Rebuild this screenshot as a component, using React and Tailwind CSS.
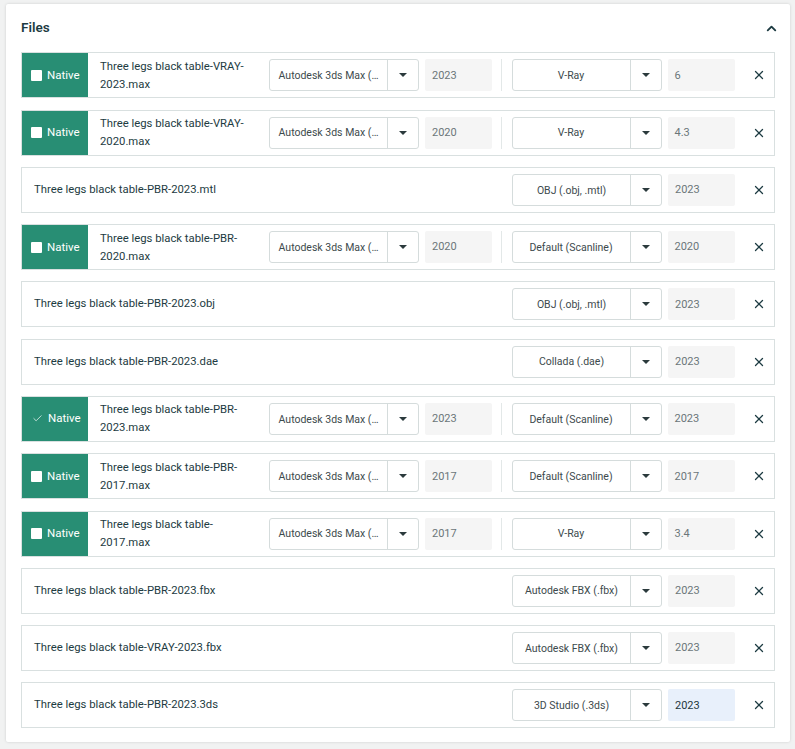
import { X, ChevronUp, Check } from 'lucide-react'

const files = [
  { name: 'Three legs black table-VRAY-2023.max', native: true, renderer: 'V-Ray', version: '6', year: '2023' },
  { name: 'Three legs black table-VRAY-2020.max', native: true, renderer: 'V-Ray', version: '4.3', year: '2020' },
  { name: 'Three legs black table-PBR-2023.mtl', renderer: 'OBJ (.obj, .mtl)', version: '2023' },
  { name: 'Three legs black table-PBR-2020.max', native: true, renderer: 'Default (Scanline)', version: '2020', year: '2020' },
  { name: 'Three legs black table-PBR-2023.obj', renderer: 'OBJ (.obj, .mtl)', version: '2023' },
  { name: 'Three legs black table-PBR-2023.dae', renderer: 'Collada (.dae)', version: '2023' },
  { name: 'Three legs black table-PBR-2023.max', native: true, checked: true, renderer: 'Default (Scanline)', version: '2023', year: '2023' },
  { name: 'Three legs black table-PBR-2017.max', native: true, renderer: 'Default (Scanline)', version: '2017', year: '2017' },
  { name: 'Three legs black table-2017.max', native: true, renderer: 'V-Ray', version: '3.4', year: '2017' },
  { name: 'Three legs black table-PBR-2023.fbx', renderer: 'Autodesk FBX (.fbx)', version: '2023' },
  { name: 'Three legs black table-VRAY-2023.fbx', renderer: 'Autodesk FBX (.fbx)', version: '2023' },
  { name: 'Three legs black table-PBR-2023.3ds', renderer: '3D Studio (.3ds)', version: '2023', active: true },
]

function Select({ label }) {
  return (
    <div className="flex h-8 w-[150px] shrink-0 rounded-[3px] border border-[#d5dcdc] bg-white">
      <div className="flex min-w-0 flex-1 items-center justify-center whitespace-nowrap border-r border-[#d5dcdc] pt-px text-[10.5px] text-[#3d4a4d]">
        {label}
      </div>
      <div className="flex w-[30px] shrink-0 items-center justify-center">
        <div className="h-0 w-0 border-x-[4px] border-t-[4px] border-x-transparent border-t-[#2b3a3d]" />
      </div>
    </div>
  )
}

function YearInput({ value, active }) {
  return (
    <div className={`flex h-8 w-[67px] shrink-0 items-center rounded-[2px] px-[7px] pt-px text-[11px] ${active ? 'bg-[#e8f0fb] text-[#24383d]' : 'bg-[#f5f5f5] text-[#6b7679]'}`}>
      {value}
    </div>
  )
}

function FileRow({ file }) {
  return (
    <div className="flex h-[46px] items-center border border-[#d9e0e0] bg-white">
      {file.native ? (
        <>
          <div className="flex h-full w-[66px] shrink-0 items-center gap-[5px] bg-[#288e74] pl-[9px] text-[11.5px] text-white">
            {file.checked ? (
              <Check size={11} strokeWidth={1.5} className="mx-[0.5px]" />
            ) : (
              <div className="h-[11px] w-[11px] rounded-[1px] bg-white" />
            )}
            Native
          </div>
          <div className="w-[181px] shrink-0 pl-3 pr-2 pt-px text-[11.3px] leading-[18px] text-[#1d3b42]">{file.name}</div>
          <Select label="Autodesk 3ds Max (…" />
          <div className="ml-1.5"><YearInput value={file.year} /></div>
          <div className="ml-[9px] mr-[9.5px] h-8 w-px bg-[#e3e8e8]" />
        </>
      ) : (
        <div className="flex-1 pl-3 pt-px text-[11.3px] text-[#1d3b42]">{file.name}</div>
      )}
      <Select label={file.renderer} />
      <div className="ml-1.5"><YearInput value={file.version} active={file.active} /></div>
      <div className="flex w-[39px] shrink-0 justify-center pl-[9px] text-[#1d3b42]">
        <X size={14} strokeWidth={2.25} />
      </div>
    </div>
  )
}

export default function App() {
  return (
    <div className="h-[749px] bg-[#f1f2f2] pl-1.5 pr-[5px] pt-1 font-['Roboto',sans-serif]">
      <div className="h-[738px] rounded-[2px] bg-white px-[15px] shadow-[0_0_3px_rgba(0,0,0,0.15)]">
        <div className="flex h-[48.4px] items-center justify-between">
          <h2 className="pb-0.5 text-[13.5px] font-semibold text-[#1d3b42]">Files</h2>
          <ChevronUp size={15} strokeWidth={3} className="-mr-[3.5px] text-[#1d3b42]" />
        </div>
        <div className="flex flex-col gap-[11.27px]">
          {files.map((file, i) => <FileRow key={i} file={file} />)}
        </div>
      </div>
    </div>
  )
}
